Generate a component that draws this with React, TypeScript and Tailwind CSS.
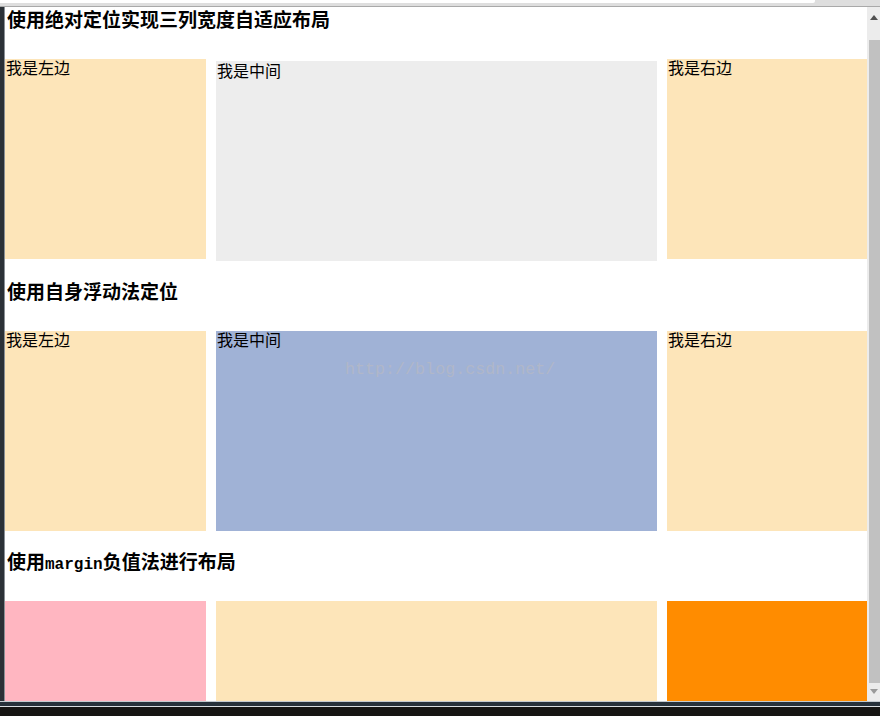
import React from "react";

const cjk = { fontFamily: '"Noto Sans CJK SC", "Noto Sans", sans-serif' };

function Heading({ children, first }: { children: React.ReactNode; first?: boolean }) {
  return (
    <div
      className={`${first ? "mt-[2px]" : "mt-[20px]"} pl-[2px] h-[20px] leading-[20px] text-[19px] font-bold text-black`}
      style={cjk}
    >
      {children}
    </div>
  );
}

function Box({ cls, label, children }: { cls: string; label?: string; children?: React.ReactNode }) {
  return (
    <div className={`relative ${cls} text-[16px] leading-[17px] text-black pl-[1px]`} style={cjk}>
      {label}
      {children}
    </div>
  );
}

export default function App() {
  return (
    <div className="w-[880px] h-[716px] overflow-hidden flex flex-col bg-white">
      {/* browser chrome top */}
      <div className="h-[7px] bg-[#dedede] flex flex-col">
        <div className="h-[3px] w-[815px] bg-white rounded-br-[2px]" />
        <div className="flex-1" />
        <div className="h-[1px] bg-[#a9a9a9]" />
      </div>
      <div className="flex-1 flex min-h-0">
        {/* left frame border */}
        <div className="w-[5px] bg-[#2b3137] flex">
          <div className="w-[4px]" />
          <div className="w-[1px] bg-[#8a9096]" />
        </div>
        {/* content */}
        <div className="w-[862px] flex flex-col">
          <Heading first>使用绝对定位实现三列宽度自适应布局</Heading>
          <div className="mt-[30px] flex h-[202px] items-start">
            <Box cls="w-[201px] h-[200px] bg-[#fde5b9]" label="我是左边" />
            <div className="w-[10px]" />
            <Box cls="mt-[2px] w-[441px] h-[200px] bg-[#ededed] pt-[1px]" label="我是中间" />
            <div className="w-[10px]" />
            <Box cls="w-[200px] h-[200px] bg-[#fde5b9]" label="我是右边" />
          </div>
          <Heading>使用自身浮动法定位</Heading>
          <div className="mt-[30px] flex h-[200px]">
            <Box cls="w-[201px] h-[200px] bg-[#fde5b9]" label="我是左边" />
            <div className="w-[10px]" />
            <Box cls="w-[441px] h-[200px] bg-[#a0b2d6]" label="我是中间">
              <div
                className="absolute left-[129px] top-[29px] text-[16.7px] leading-[20px] text-[#b0b7c9] whitespace-nowrap"
                style={{ fontFamily: '"Liberation Mono", monospace' }}
              >
                http://blog.csdn.net/
              </div>
            </Box>
            <div className="w-[10px]" />
            <Box cls="w-[200px] h-[200px] bg-[#fde5b9]" label="我是右边" />
          </div>
          <Heading>
            使用
            <span style={{ fontFamily: '"Liberation Mono", monospace' }} className="text-[16px]">
              margin
            </span>
            负值法进行布局
          </Heading>
          <div className="mt-[30px] flex h-[100px]">
            <div className="w-[201px] h-[100px] bg-[#ffb6c1]" />
            <div className="w-[10px]" />
            <div className="w-[441px] h-[100px] bg-[#fde5b9]" />
            <div className="w-[10px]" />
            <div className="w-[200px] h-[100px] bg-[#ff8c00]" />
          </div>
        </div>
        {/* scrollbar */}
        <div className="w-[13px] bg-[#ececec] flex flex-col">
          <div className="h-[33px] flex justify-center pt-[8px]">
            <svg width="8" height="5" viewBox="0 0 8 5">
              <polygon points="4,0 8,5 0,5" fill="#505050" />
            </svg>
          </div>
          <div className="flex-1 ml-[2px] bg-[#c1c1c1]" />
          <div className="h-[18px] flex justify-center pt-[6px]">
            <svg width="8" height="5" viewBox="0 0 8 5">
              <polygon points="0,0 8,0 4,5" fill="#9a9a9a" />
            </svg>
          </div>
        </div>
      </div>
      {/* bottom frame */}
      <div className="h-[15px] flex flex-col">
        <div className="h-[1px] bg-[#c5cbd0]" />
        <div className="h-[4px] bg-[#27313a]" />
        <div className="h-[1px] bg-[#d8dcdf]" />
        <div className="flex-1 bg-[#161513]" />
      </div>
    </div>
  );
}
